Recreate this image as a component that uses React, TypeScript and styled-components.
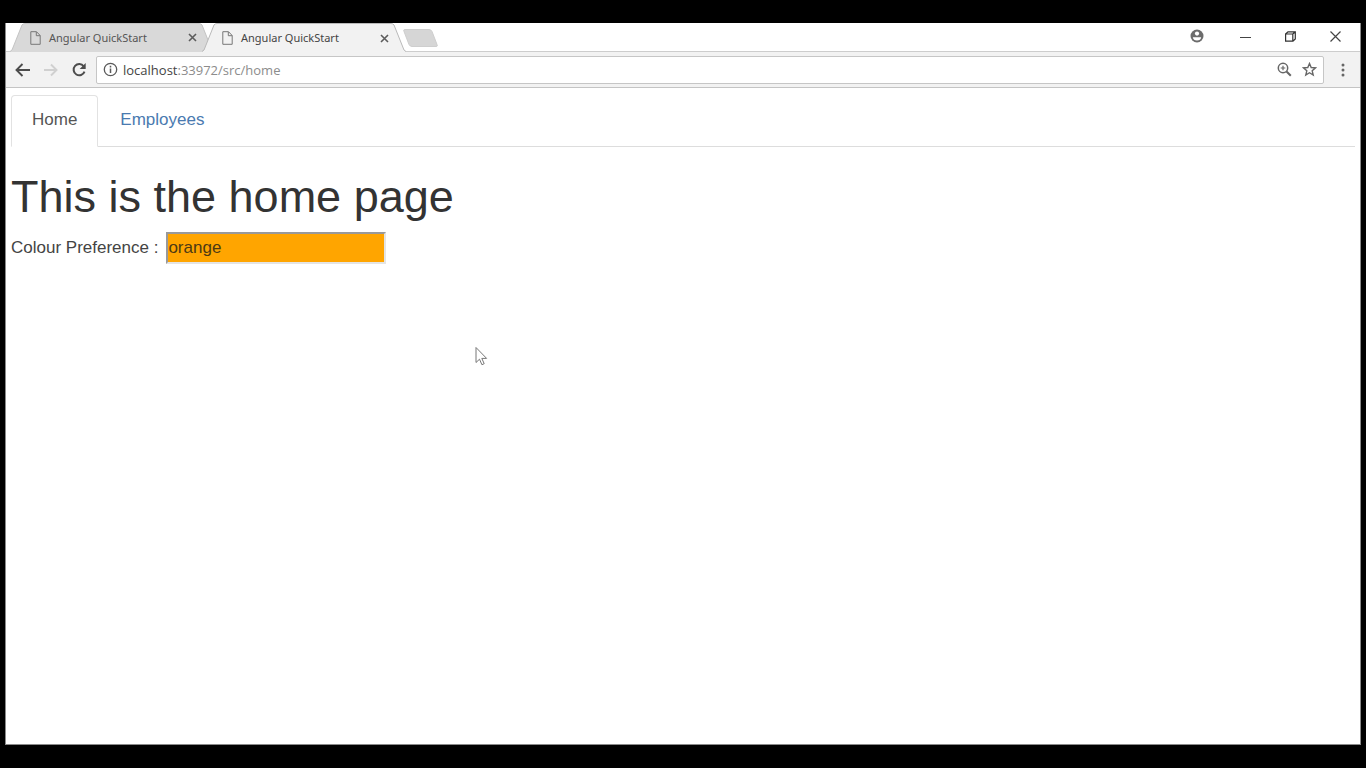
import React, { useState } from "react";
import styled, { createGlobalStyle } from "styled-components";

const GlobalStyle = createGlobalStyle`
  * { box-sizing: border-box; }
  body { margin: 0; background: #000; }
  button { font: inherit; border: 0; padding: 0; background: none; color: inherit; cursor: default; }
`;

const Desktop = styled.div`
  min-height: 100vh;
  padding: 23px 5px;
  display: flex;
  background: #000;
`;

const BrowserWindow = styled.div`
  position: relative;
  flex: 1;
  min-width: 0;
  display: flex;
  flex-direction: column;
  background: #fff;
  border: 1px solid #8a8a8a;
  border-top: 0;
  font-family: "Noto Sans", "Open Sans", sans-serif;
`;

const TitleBar = styled.div`
  height: 28px;
  display: flex;
  align-items: flex-start;
  padding-left: 4px;
`;

const Tab = styled.div<{ $active?: boolean }>`
  position: relative;
  z-index: ${(p) => (p.$active ? 2 : 1)};
  width: 204px;
  height: ${(p) => (p.$active ? 29 : 28)}px;
  margin-right: -12px;
  padding: 1px 16px 0 20px;
  display: flex;
  align-items: center;
  color: ${(p) => (p.$active ? "#444" : "#555")};
  font-size: 11px;
  line-height: 16px;
`;

const TabShape = styled.svg`
  position: absolute;
  inset: 0;
  z-index: -1;
`;

const TabTitle = styled.span`
  flex: 1;
  padding-left: 8px;
  white-space: nowrap;
`;

const TabClose = styled.button`
  width: 12px;
  height: 12px;
  display: flex;
  align-items: center;
  justify-content: center;
`;

const NewTab = styled.button`
  width: 38px;
  height: 29px;
  margin-left: 8px;
  display: flex;
  align-items: center;
`;

const WindowControls = styled.div`
  flex: 1;
  display: flex;
  justify-content: flex-end;
  padding-right: 2px;
  color: #444;
`;

const WindowButton = styled.button<{ $wide?: boolean }>`
  width: ${(p) => (p.$wide ? 52 : 45)}px;
  height: 28px;
  display: flex;
  align-items: center;
  justify-content: center;
  padding-bottom: 2px;
`;

const Toolbar = styled.div`
  height: 37px;
  display: flex;
  align-items: center;
  padding: 0 3px 0 3px;
  background: #f2f2f2;
  border-top: 1px solid #cdcdcd;
  border-bottom: 1px solid #c4c4c4;
  color: #555;
`;

const ToolButton = styled.button<{ $muted?: boolean }>`
  width: 28px;
  height: 28px;
  display: flex;
  align-items: center;
  justify-content: center;
  color: ${(p) => (p.$muted ? "#d0d0d0" : "#4c4c4c")};
`;

const MenuButton = styled(ToolButton)`
  margin-left: 5px;
  color: #666;
`;

const AddressBar = styled.div`
  flex: 1;
  min-width: 0;
  height: 28px;
  margin-left: 3px;
  padding: 0 1px 0 6px;
  display: flex;
  align-items: center;
  background: #fff;
  border: 1px solid #c6c6c6;
  border-radius: 2px;
`;

const Url = styled.span`
  flex: 1;
  padding-left: 5px;
  font-family: "Open Sans", "Noto Sans", sans-serif;
  font-size: 13px;
  line-height: 18px;
  color: #8c8c8c;
`;

const Host = styled.span`
  color: #444;
`;

const AddressButton = styled(ToolButton)`
  width: 25px;
  color: #666;
`;

const Page = styled.main`
  flex: 1;
  padding: 7px 5px;
  font-family: "Liberation Sans", Arial, sans-serif;
  font-size: 17px;
  line-height: 26px;
  color: #444;
`;

const NavTabs = styled.nav`
  display: flex;
  border-bottom: 1px solid #ddd;
`;

const NavLink = styled.a<{ $active?: boolean }>`
  height: 52px;
  margin-bottom: -1px;
  margin-right: 1px;
  padding: 11px 20px 0;
  border: 1px solid ${(p) => (p.$active ? "#e2e2e2" : "transparent")};
  border-bottom-color: ${(p) => (p.$active ? "#fff" : "transparent")};
  border-radius: 4px 4px 0 0;
  background: ${(p) => (p.$active ? "#fff" : "transparent")};
  color: ${(p) => (p.$active ? "#555" : "#4a7ab0")};
  text-decoration: none;
`;

const Heading = styled.h1`
  margin: 25px 0 10px;
  font-size: 45px;
  line-height: 50px;
  font-weight: 400;
  color: #333;
`;

const Field = styled.div`
  display: flex;
  align-items: center;
  gap: 8px;
`;

const ColourInput = styled.input`
  width: 220px;
  height: 32px;
  padding: 0;
  border: 2px solid;
  border-color: #999 #e4e4e4 #e4e4e4 #999;
  border-radius: 0;
  outline: 0;
  font: inherit;
  color: #4d3a14;
`;

const Pointer = styled.svg`
  position: absolute;
  left: 469px;
  top: 323px;
  pointer-events: none;
`;

const FileIcon = () => (
  <svg width="11" height="14" viewBox="0 0 11 14" fill="none" stroke="#777">
    <path d="M.8.7h5.7l3.7 3.8v8.8H.8zM6.3.9v3.8h3.8" />
  </svg>
);

const BrowserTab = ({ title, active }: { title: string; active?: boolean }) => (
  <Tab $active={active}>
    <TabShape width="204" height="29" viewBox="0 0 204 29">
      <path
        d="M0 29 2 27 12 2Q13 .5 15 .5H189Q191 .5 192 2L202 27 204 29Z"
        fill={active ? "#f2f2f2" : "#d9d9d9"}
      />
      <path
        d="M0 28.5 2 27 12 2Q13 .5 15 .5H189Q191 .5 192 2L202 27 204 28.5"
        fill="none"
        stroke={active ? "#b9b9b9" : "#c4c4c4"}
      />
    </TabShape>
    <FileIcon />
    <TabTitle>{title}</TabTitle>
    <TabClose aria-label="Close tab">
      <svg width="9" height="9" viewBox="0 0 9 9" stroke="#5c5c5c" strokeWidth="1.6">
        <path d="m1 1 7 7M8 1 1 8" />
      </svg>
    </TabClose>
  </Tab>
);

export default function App() {
  const [colour, setColour] = useState("orange");
  return (
    <Desktop>
      <GlobalStyle />
      <BrowserWindow>
        <TitleBar>
          <BrowserTab title="Angular QuickStart" />
          <BrowserTab title="Angular QuickStart" active />
          <NewTab aria-label="New tab">
            <svg width="38" height="20" viewBox="0 0 38 20">
              <path d="M3 1.5h24q2 0 3 2l5 13q1 2-1 2H10q-2 0-3-2l-5-13q-1-2 1-2z" fill="#d6d6d6" stroke="#cecece" />
            </svg>
          </NewTab>
          <WindowControls>
            <WindowButton $wide aria-label="Profile">
              <svg width="14" height="14" viewBox="0 0 14 14">
                <circle cx="7" cy="7" r="6.5" fill="#6c6c6c" />
                <circle cx="7" cy="4.6" r="2.1" fill="#fff" />
                <path d="M2.8 8.2h8.4q-.6 3.3-4.2 3.3t-4.2-3.3z" fill="#fff" />
              </svg>
            </WindowButton>
            <WindowButton aria-label="Minimize">
              <svg width="11" height="11" viewBox="0 0 11 11" stroke="currentColor">
                <path d="M0 6.5h11" />
              </svg>
            </WindowButton>
            <WindowButton aria-label="Restore">
              <svg width="11" height="11" viewBox="0 0 11 11" fill="none" stroke="#333" strokeWidth="1.2">
                <path d="M.6 3h7.2v7.200H.6zM.6 3 3 .8h7.300V8L7.800 10.200M7.800 3 10.300.8" />
              </svg>
            </WindowButton>
            <WindowButton aria-label="Close">
              <svg width="11" height="11" viewBox="0 0 11 11" stroke="currentColor" strokeWidth="1.2">
                <path d="m.5.5 10 10M10.500.5l-10 10" />
              </svg>
            </WindowButton>
          </WindowControls>
        </TitleBar>
        <Toolbar>
          <ToolButton aria-label="Back">
            <svg width="16" height="14" viewBox="0 0 16 14" fill="none" stroke="currentColor" strokeWidth="1.9">
              <path d="M15 7H2M7.500 1l-6 6 6 6" />
            </svg>
          </ToolButton>
          <ToolButton $muted aria-label="Forward">
            <svg width="14" height="14" viewBox="0 0 14 14" fill="none" stroke="currentColor" strokeWidth="1.9">
              <path d="M0 7h12M7 1.500 12.500 7 7 12.500" />
            </svg>
          </ToolButton>
          <ToolButton aria-label="Reload">
            <svg width="16" height="16" viewBox="0 0 16 16" fill="none" stroke="currentColor" strokeWidth="2">
              <path d="M12.700 4.300A5.600 5.600 0 1 0 13.500 9.600" />
              <path d="M14.700 1v6h-6z" fill="currentColor" stroke="none" />
            </svg>
          </ToolButton>
          <AddressBar>
            <svg width="15" height="15" viewBox="0 0 15 15" fill="none" stroke="#5a5a5a">
              <circle cx="7.500" cy="7.500" r="6.200" strokeWidth="1.300" />
              <path d="M7.500 6.600v4.400M7.500 3.800v1.600" strokeWidth="1.500" />
            </svg>
            <Url>
              <Host>localhost</Host>:33972/src/home
            </Url>
            <AddressButton aria-label="Zoom">
              <svg width="15" height="15" viewBox="0 0 15 15" fill="none" stroke="currentColor">
                <circle cx="6" cy="6" r="4.700" strokeWidth="1.500" />
                <path d="m9.500 9.500 4.300 4.300" strokeWidth="2" />
                <path d="M3.700 6h4.600M6 3.700v4.600" strokeWidth="1.200" />
              </svg>
            </AddressButton>
            <AddressButton aria-label="Bookmark">
              <svg width="15" height="15" viewBox="0 0 15 15" fill="none" stroke="currentColor" strokeWidth="1.400">
                <path d="m7.500 1.500 1.700 4 4.300.4-3.300 2.900 1 4.200-3.700-2.300L3.800 13l1-4.200-3.300-2.900 4.300-.4z" />
              </svg>
            </AddressButton>
          </AddressBar>
          <MenuButton aria-label="Menu">
            <svg width="4" height="14" viewBox="0 0 4 14" fill="currentColor">
              <circle cx="2" cy="2" r="1.500" />
              <circle cx="2" cy="7" r="1.500" />
              <circle cx="2" cy="12" r="1.500" />
            </svg>
          </MenuButton>
        </Toolbar>
        <Page>
          <NavTabs>
            <NavLink href="#home" $active>Home</NavLink>
            <NavLink href="#employees">Employees</NavLink>
          </NavTabs>
          <Heading>This is the home page</Heading>
          <Field>
            <label htmlFor="colour">Colour Preference :</label>
            <ColourInput
              id="colour"
              value={colour}
              onChange={(e) => setColour(e.target.value)}
              style={{ backgroundColor: colour }}
            />
          </Field>
        </Page>
        <Pointer width="13" height="21" viewBox="0 0 13 21">
          <path d="M1 1.500v15l3.500-3.300 2.400 5.500 2.300-1-2.400-5.300h4.800z" fill="#fff" stroke="#777" />
        </Pointer>
      </BrowserWindow>
    </Desktop>
  );
}
